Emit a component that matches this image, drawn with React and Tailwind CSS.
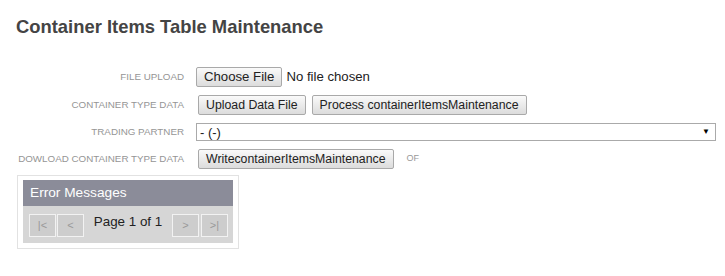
export default function App() {
  const btn =
    "h-5 px-[7px] border border-[#a9a9a9] rounded-[2px] bg-gradient-to-b from-[#fafafa] to-[#dcdcdc] text-[12.3px] leading-none text-[#222]";
  const label = "text-[9.8px] uppercase text-[#959595] text-right";
  const pbtn =
    "w-[27px] h-[23px] border border-[#f2f2f2] bg-[#cdcdcd] flex items-center justify-center text-[#999] text-[11px]";

  return (
    <div
      className="w-[725px] h-[276px] bg-white pl-4 pt-[16px]"
      style={{ fontFamily: '"Liberation Sans", Arial, sans-serif' }}
    >
      <h1 className="text-[18.4px] font-bold text-[#444] leading-[22px]">
        Container Items Table Maintenance
      </h1>

      <div className="mt-[29px] grid grid-cols-[168px_1fr] gap-x-3 items-center">
        <div className={label}>File Upload</div>
        <div className="flex items-center gap-1 h-5">
          <button className={`${btn} text-[13.2px]`}>Choose File</button>
          <span className="text-[13.2px] text-[#222]">No file chosen</span>
        </div>

        <div className={`${label} mt-2`}>Container Type Data</div>
        <div className="flex items-center gap-[6px] mt-2 pl-[2px]">
          <button className={btn}>Upload Data File</button>
          <button className={btn}>Process containerItemsMaintenance</button>
        </div>

        <div className={`${label} mt-2`}>Trading Partner</div>
        <div className="mt-2 h-[18px] w-[520px] border border-[#aaa] bg-white flex items-center justify-between pl-[3px] pr-[5px]">
          <span className="text-[13px] text-[#222] leading-none">- (-)</span>
          <span className="text-[8px] text-black leading-none">▼</span>
        </div>

        <div className={`${label} mt-2`}>Dowload Container Type Data</div>
        <div className="flex items-center gap-[13px] mt-2 pl-[2px]">
          <button className={btn}>WritecontainerItemsMaintenance</button>
          <span className="text-[9px] text-[#999]">OF</span>
        </div>
      </div>

      <div className="mt-[6px] ml-px w-[222px] border border-[#e2e2e2] p-[5px] pt-[4px] pb-[5px] bg-white">
        <div className="h-[26px] bg-[#8b8c99] text-white text-[13.7px] flex items-center pl-[7px]">
          Error Messages
        </div>
        <div className="h-[37px] bg-[#d6d6d6] flex items-center pl-[6px] pb-[3px] pt-[5px]">
          <div className={pbtn}>|&lt;</div>
          <div className={`${pbtn} ml-px`}>&lt;</div>
          <div className="w-[88px] text-center text-[13.4px] text-[#222] -mt-[7px]">
            Page 1 of 1
          </div>
          <div className={pbtn}>&gt;</div>
          <div className={`${pbtn} ml-[2px]`}>&gt;|</div>
        </div>
      </div>
    </div>
  );
}
